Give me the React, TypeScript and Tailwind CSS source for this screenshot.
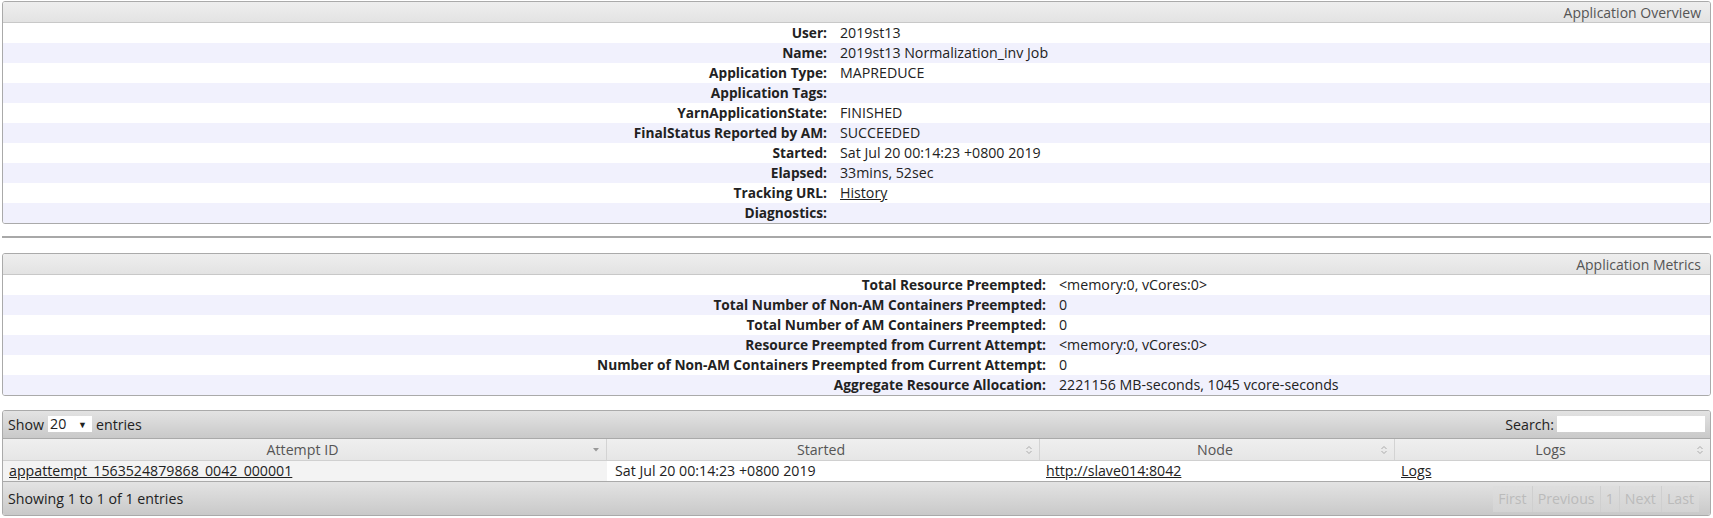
import React from "react";

const font = { fontFamily: '"Open Sans", "Noto Sans", "Liberation Sans", sans-serif' };

type Row = [string, React.ReactNode];

const overview: Row[] = [
  ["User:", "2019st13"],
  ["Name:", "2019st13 Normalization_inv Job"],
  ["Application Type:", "MAPREDUCE"],
  ["Application Tags:", ""],
  ["YarnApplicationState:", "FINISHED"],
  ["FinalStatus Reported by AM:", "SUCCEEDED"],
  ["Started:", "Sat Jul 20 00:14:23 +0800 2019"],
  ["Elapsed:", "33mins, 52sec"],
  ["Tracking URL:", <a className="underline text-[#222]">History</a>],
  ["Diagnostics:", ""],
];

const metrics: Row[] = [
  ["Total Resource Preempted:", "<memory:0, vCores:0>"],
  ["Total Number of Non-AM Containers Preempted:", "0"],
  ["Total Number of AM Containers Preempted:", "0"],
  ["Resource Preempted from Current Attempt:", "<memory:0, vCores:0>"],
  ["Number of Non-AM Containers Preempted from Current Attempt:", "0"],
  ["Aggregate Resource Allocation:", "2221156 MB-seconds, 1045 vcore-seconds"],
];

function InfoPanel({ title, rows, labelW }: { title: string; rows: Row[]; labelW: string }) {
  return (
    <div className="border border-[#aaaaaa] rounded-[3px] overflow-hidden">
      <div className="h-[21px] bg-gradient-to-b from-[#eeeeee] to-[#e3e3e3] border-b border-[#c8c8c8] flex items-center justify-end pr-[9px] text-[#555555] text-[14px]">
        {title}
      </div>
      <div>
        {rows.map(([k, v], i) => (
          <div
            key={i}
            className={`flex h-[20px] items-center ${i % 2 === 1 ? "bg-[#f1f1fd]" : "bg-white"}`}
          >
            <div className={`${labelW} shrink-0 text-right font-bold text-[13.7px] text-[#222222] pr-[7px]`}>{k}</div>
            <div className="pl-[6px] text-[14.2px] text-[#222222]">{v}</div>
          </div>
        ))}
      </div>
    </div>
  );
}

function SortBoth() {
  return (
    <svg width="8" height="10" viewBox="0 0 8 10" className="shrink-0">
      <path d="M1.5 4 L4 1.5 L6.5 4" fill="none" stroke="#aaaaaa" strokeWidth="1" />
      <path d="M1.5 6 L4 8.5 L6.5 6" fill="none" stroke="#aaaaaa" strokeWidth="1" />
    </svg>
  );
}

function SortDesc() {
  return (
    <svg width="8" height="6" viewBox="0 0 8 6" className="shrink-0">
      <path d="M1 1 L7 1 L4 4.5 Z" fill="#999999" />
    </svg>
  );
}

export default function App() {
  return (
    <div className="w-[1713px] bg-white px-[2px] pt-px text-[#222222]" style={font}>
      <InfoPanel title="Application Overview" rows={overview} labelW="w-[831px]" />
      <div className="mt-[12px] h-[2px] bg-[#a8a8a8]" />
      <div className="mt-[15px]">
        <InfoPanel title="Application Metrics" rows={metrics} labelW="w-[1050px]" />
      </div>

      <div className="mt-[14px] border border-[#aaaaaa] rounded-[3px] overflow-hidden text-[14.2px]">
        <div className="h-[28px] bg-gradient-to-b from-[#e3e3e3] to-[#c9c9c9] flex items-center justify-between px-[5px] border-b border-[#aaaaaa]">
          <div className="flex items-center gap-[4px] text-[#222222]">
            <span>Show</span>
            <span className="bg-white h-[16px] w-[44px] flex items-center justify-between px-[2px] leading-none">
              <span>20</span>
              <span className="text-[9px] mr-[3px]">▼</span>
            </span>
            <span>entries</span>
          </div>
          <div className="flex items-center gap-[3px] text-[#222222]">
            <span>Search:</span>
            <span className="bg-white h-[16px] w-[148px] block" />
          </div>
        </div>
        <div className="flex h-[22px] bg-gradient-to-b from-[#efefef] to-[#e6e6e6] border-b border-[#d0d0d0] text-[#555555]">
          {[
            ["Attempt ID", "w-[604px]", true],
            ["Started", "w-[433px]", false],
            ["Node", "w-[355px]", false],
            ["Logs", "flex-1", false],
          ].map(([t, w, desc], i) => (
            <div
              key={i}
              className={`${w} flex items-center pl-[10px] pr-[6px] ${i < 3 ? "border-r border-[#d3d3d3]" : ""}`}
            >
              <span className="flex-1 text-center">{t as string}</span>
              {desc ? <SortDesc /> : <SortBoth />}
            </div>
          ))}
        </div>
        <div className="flex h-[20px] items-center">
          <div className="w-[604px] h-full flex items-center bg-[#f3f3f3] pl-[6px]">
            <a className="underline text-[#222222]">appattempt_1563524879868_0042_000001</a>
          </div>
          <div className="w-[433px] pl-[8px]">Sat Jul 20 00:14:23 +0800 2019</div>
          <div className="w-[355px] pl-[6px]">
            <a className="underline text-[#222222]">http://slave014:8042</a>
          </div>
          <div className="flex-1 pl-[6px]">
            <a className="underline text-[#222222]">Logs</a>
          </div>
        </div>
        <div className="h-[34px] bg-gradient-to-b from-[#e3e3e3] to-[#c9c9c9] flex items-center justify-between pl-[5px] pr-[11px] border-t border-[#aaaaaa]">
          <span className="text-[#222222]">Showing 1 to 1 of 1 entries</span>
          <div className="flex items-center h-[26px] text-[#bbbbbb]">
            {["First", "Previous", "1", "Next", "Last"].map((t, i) => (
              <span
                key={i}
                className={`h-full flex items-center px-[5px] bg-gradient-to-b from-[#dedede] to-[#d4d4d4] ${i < 4 ? "border-r border-[#cfcfcf]" : ""}`}
              >
                {t}
              </span>
            ))}
          </div>
        </div>
      </div>
    </div>
  );
}
